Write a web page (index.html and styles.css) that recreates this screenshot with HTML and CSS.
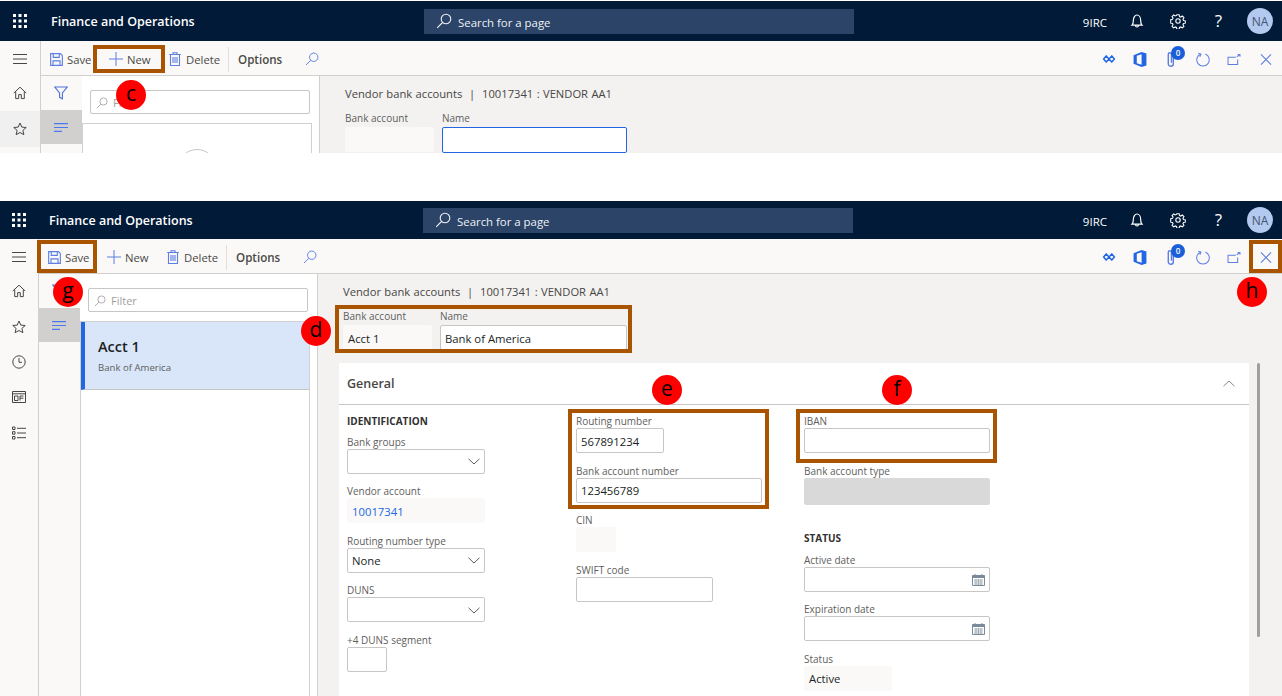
FILE: index.html
```html
<!DOCTYPE html>
<html>
<head>
<meta charset="utf-8">
<title>Vendor bank accounts</title>
<link rel="stylesheet" href="styles.css">
</head>
<body>

<!-- icon sprite -->
<svg class="sprite" xmlns="http://www.w3.org/2000/svg">
	<symbol id="i-waffle" viewBox="0 0 14 14"><g fill="currentColor"><rect x="0" y="0" width="3" height="3"/><rect x="5.5" y="0" width="3" height="3"/><rect x="11" y="0" width="3" height="3"/><rect x="0" y="5.5" width="3" height="3"/><rect x="5.5" y="5.5" width="3" height="3"/><rect x="11" y="5.5" width="3" height="3"/><rect x="0" y="11" width="3" height="3"/><rect x="5.5" y="11" width="3" height="3"/><rect x="11" y="11" width="3" height="3"/></g></symbol>
	<symbol id="i-search" viewBox="0 0 16 16"><path d="M10 1.2a4.8 4.8 0 1 1 0 9.6a4.8 4.8 0 0 1 0-9.6zM6.5 9.5L1.2 14.8" fill="none" stroke="currentColor" stroke-width="1.1"/></symbol>
	<symbol id="i-bell" viewBox="0 0 16 16"><path d="M3 12.2c1-1 1.3-2 1.3-4.5C4.300 4.500 6 2 8 2s3.700 2.500 3.700 5.700c0 2.500.3 3.500 1.300 4.500zM6.500 12.500c0 2 3 2 3 0" fill="none" stroke="currentColor" stroke-width="1.2"/></symbol>
	<symbol id="i-gear" viewBox="0 0 16 16"><circle cx="8" cy="8" r="2.200" fill="none" stroke="currentColor" stroke-width="1.100"/><path d="M6.700 1h2.600l.4 2 1.400.6 1.700-1.100 1.800 1.800-1.100 1.700.6 1.400 2 .4v2.600l-2 .4-.6 1.400 1.100 1.700-1.800 1.800-1.700-1.100-1.400.6-.4 2H6.700l-.4-2-1.400-.6-1.700 1.100-1.800-1.800 1.100-1.700-.6-1.400-2-.4V6.600l2-.4.600-1.400-1.100-1.700 1.800-1.800 1.700 1.100 1.400-.6z" transform="translate(.8 .8) scale(.9)" fill="none" stroke="currentColor" stroke-width="1.200"/></symbol>
	<symbol id="i-menu" viewBox="0 0 14 10"><path d="M0 .5h14M0 5h14M0 9.500h14" stroke="currentColor" stroke-width="1"/></symbol>
	<symbol id="i-home" viewBox="0 0 14 14"><path d="M.8 7L7 1.200L13.200 7M2.700 5.600v7h3v-4h2.600v4h3v-7" fill="none" stroke="currentColor" stroke-width="1"/></symbol>
	<symbol id="i-star" viewBox="0 0 14 14"><path d="M7 1l1.800 4.100l4.400.4l-3.300 2.900l1 4.300L7 10.500l-3.900 2.200l1-4.300L.8 5.500l4.400-.4z" fill="none" stroke="currentColor" stroke-width="1"/></symbol>
	<symbol id="i-clock" viewBox="0 0 14 14"><circle cx="7" cy="7" r="6.200" fill="none" stroke="currentColor" stroke-width="1"/><path d="M7 3v4.300h3" fill="none" stroke="currentColor" stroke-width="1"/></symbol>
	<symbol id="i-workspace" viewBox="0 0 14 12"><path d="M.5 .5h13v11H.5zM.5 2.800h13" fill="none" stroke="currentColor" stroke-width="1"/><path d="M2.500 5h3.500v4.500H2.500zM8 5h3.500M8 7.200h3.500M8 5v4.500" fill="none" stroke="currentColor" stroke-width="1"/></symbol>
	<symbol id="i-list" viewBox="0 0 14 13"><path d="M.5 .5h2.500v2.500H.5zM.5 5.200h2.500v2.500H.5zM.5 10h2.500v2.500H.5zM5 1.800h9M5 6.500h9M5 11.200h9" fill="none" stroke="currentColor" stroke-width="1"/></symbol>
	<symbol id="i-save" viewBox="0 0 14 14"><path d="M.7 .7h10.600l2 2v10.600H.7zM3.500 .7v4h6.500v-4M3.200 13.300V8.500h7.600v4.800" fill="none" stroke="currentColor" stroke-width="1.200"/></symbol>
	<symbol id="i-plus" viewBox="0 0 14 14"><path d="M7 0v14M0 7h14" stroke="currentColor" stroke-width="1"/></symbol>
	<symbol id="i-trash" viewBox="0 0 12 14"><path d="M.2 2.500h11.600M4 2.500V.8h4v1.700M1.500 2.500v11h9v-11M4 5v6M6 5v6M8 5v6" fill="none" stroke="currentColor" stroke-width="1.100"/></symbol>
	<symbol id="i-funnel" viewBox="0 0 14 14"><path d="M.8 1h12.400L8.400 7v5.800l-2.800-1.500V7z" fill="none" stroke="currentColor" stroke-width="1.100"/></symbol>
	<symbol id="i-lines" viewBox="0 0 14 9"><path d="M0 .6h14M0 4.500h14M0 8.400h8" stroke="currentColor" stroke-width="1.200"/></symbol>
	<symbol id="i-apps" viewBox="0 0 12 8"><path d="M3.200 1L6 4L3.200 7L.6 4zM8.800 1L11.400 4L8.800 7L6 4z" fill="none" stroke="currentColor" stroke-width="1.500"/></symbol>
	<symbol id="i-office" viewBox="0 0 12 14"><path d="M0 3L7.500 0L12 1.300v11.400L7.500 14L0 11zM7.500 2L3 3.500V10.500L7.500 12z" fill="currentColor" fill-rule="evenodd"/></symbol>
	<symbol id="i-clip" viewBox="0 0 10 16"><path d="M7.500 3.500v9a2.700 2.700 0 0 1-5.400 0v-10a1.700 1.700 0 0 1 3.400 0v9" fill="none" stroke="currentColor" stroke-width="1.500"/></symbol>
	<symbol id="i-refresh" viewBox="0 0 16 16"><path d="M5.500 2.100a6.700 6.700 0 1 0 5 0M2.800 1.200L5.800 2.200L4.600 5" fill="none" stroke="currentColor" stroke-width="1.100"/></symbol>
	<symbol id="i-open" viewBox="0 0 14 12"><path d="M9 3.500H.5v8h10.500V6M10 3L13 1M11 .5h2.500v2.500" fill="none" stroke="currentColor" stroke-width="1.100"/></symbol>
	<symbol id="i-close" viewBox="0 0 12 12"><path d="M.5 .5l11 11M11.500 .5l-11 11" stroke="currentColor" stroke-width="1.200"/></symbol>
	<symbol id="i-down" viewBox="0 0 12 7"><path d="M.5 .8L6 6L11.500 .8" fill="none" stroke="currentColor" stroke-width="1"/></symbol>
	<symbol id="i-calendar" viewBox="0 0 13 12"><path d="M.5 1.500h12v10H.5zM3 0v2M10 0v2" fill="none" stroke="currentColor" stroke-width="1"/><path d="M.5 1.500h12v2.500H.5z" fill="currentColor"/><path d="M2 6h9M2 8h9M2 10h9M4 5v6M6.500 5v6M9 5v6" stroke="currentColor" stroke-width=".6"/></symbol>
</svg>

<div class="page">

<!-- first screenshot: new record -->
<section class="shot shot-new">
	<header class="topbar">
		<div class="brand"><span class="waffle-cell"><svg class="ic-waffle"><use href="#i-waffle"/></svg></span><span class="brand-name">Finance and Operations</span></div>
		<div class="global-search"><svg class="ic-16"><use href="#i-search"/></svg><span>Search for a page</span></div>
		<div class="top-right">
			<span class="company">9IRC</span>
			<span class="top-icon"><svg class="ic-16"><use href="#i-bell"/></svg></span>
			<span class="top-icon"><svg class="ic-16"><use href="#i-gear"/></svg></span>
			<span class="top-icon help">?</span>
			<span class="avatar">NA</span>
		</div>
	</header>
	<div class="workspace">
		<nav class="nav">
			<div class="nav-menu"><svg class="ic-menu"><use href="#i-menu"/></svg></div>
			<div class="nav-item"><svg class="ic-14"><use href="#i-home"/></svg></div>
			<div class="nav-item nav-active"><svg class="ic-14"><use href="#i-star"/></svg></div>
		</nav>
		<div class="main">
			<div class="toolbar">
				<span class="tool tool-save"><svg class="ic-13"><use href="#i-save"/></svg>Save</span>
				<span class="tool tool-new"><svg class="ic-14"><use href="#i-plus"/></svg>New</span>
				<span class="tool tool-delete"><svg class="ic-14"><use href="#i-trash"/></svg>Delete</span>
				<span class="tool-sep"></span>
				<span class="tool-options">Options</span>
				<svg class="ic-14 tool-search"><use href="#i-search"/></svg>
				<div class="tool-right">
					<svg class="ic-tool ic-apps"><use href="#i-apps"/></svg>
					<svg class="ic-tool ic-office"><use href="#i-office"/></svg>
					<span class="clip"><svg class="ic-tool"><use href="#i-clip"/></svg><span class="clip-badge">0</span></span>
					<svg class="ic-tool"><use href="#i-refresh"/></svg>
					<svg class="ic-tool ic-open"><use href="#i-open"/></svg>
					<svg class="ic-tool ic-close"><use href="#i-close"/></svg>
				</div>
			</div>
			<div class="content">
				<div class="rail">
					<div class="rail-item"><svg class="ic-14"><use href="#i-funnel"/></svg></div>
					<div class="rail-item rail-active"><svg class="ic-lines"><use href="#i-lines"/></svg></div>
				</div>
				<div class="list-pane">
					<div class="filter"><svg class="ic-12"><use href="#i-search"/></svg>Filter</div>
					<div class="records">
						<div class="empty-circle"></div>
					</div>
				</div>
				<div class="details">
					<div class="caption">Vendor bank accounts &nbsp;|&nbsp; 10017341 : VENDOR AA1</div>
					<div class="key-fields">
						<div class="key-account"><div class="label">Bank account</div><div class="control readonly"></div></div>
						<div class="key-name"><div class="label">Name</div><div class="control focused"></div></div>
					</div>
				</div>
			</div>
		</div>
	</div>
</section>

<!-- second screenshot: saved record -->
<section class="shot shot-saved">
	<header class="topbar">
		<div class="brand"><span class="waffle-cell"><svg class="ic-waffle"><use href="#i-waffle"/></svg></span><span class="brand-name">Finance and Operations</span></div>
		<div class="global-search"><svg class="ic-16"><use href="#i-search"/></svg><span>Search for a page</span></div>
		<div class="top-right">
			<span class="company">9IRC</span>
			<span class="top-icon"><svg class="ic-16"><use href="#i-bell"/></svg></span>
			<span class="top-icon"><svg class="ic-16"><use href="#i-gear"/></svg></span>
			<span class="top-icon help">?</span>
			<span class="avatar">NA</span>
		</div>
	</header>
	<div class="workspace">
		<nav class="nav">
			<div class="nav-menu"><svg class="ic-menu"><use href="#i-menu"/></svg></div>
			<div class="nav-item"><svg class="ic-14"><use href="#i-home"/></svg></div>
			<div class="nav-item"><svg class="ic-14"><use href="#i-star"/></svg></div>
			<div class="nav-item nav-short"><svg class="ic-14"><use href="#i-clock"/></svg></div>
			<div class="nav-item"><svg class="ic-14"><use href="#i-workspace"/></svg></div>
			<div class="nav-item"><svg class="ic-14"><use href="#i-list"/></svg></div>
		</nav>
		<div class="main">
			<div class="toolbar">
				<span class="tool tool-save"><svg class="ic-13"><use href="#i-save"/></svg>Save</span>
				<span class="tool tool-new"><svg class="ic-14"><use href="#i-plus"/></svg>New</span>
				<span class="tool tool-delete"><svg class="ic-14"><use href="#i-trash"/></svg>Delete</span>
				<span class="tool-sep"></span>
				<span class="tool-options">Options</span>
				<svg class="ic-14 tool-search"><use href="#i-search"/></svg>
				<div class="tool-right">
					<svg class="ic-tool ic-apps"><use href="#i-apps"/></svg>
					<svg class="ic-tool ic-office"><use href="#i-office"/></svg>
					<span class="clip"><svg class="ic-tool"><use href="#i-clip"/></svg><span class="clip-badge">0</span></span>
					<svg class="ic-tool"><use href="#i-refresh"/></svg>
					<svg class="ic-tool ic-open"><use href="#i-open"/></svg>
					<svg class="ic-tool ic-close"><use href="#i-close"/></svg>
				</div>
			</div>
			<div class="content">
				<div class="rail">
					<div class="rail-item"><svg class="ic-14"><use href="#i-funnel"/></svg></div>
					<div class="rail-item rail-active"><svg class="ic-lines"><use href="#i-lines"/></svg></div>
				</div>
				<div class="list-pane">
					<div class="filter"><svg class="ic-12"><use href="#i-search"/></svg>Filter</div>
					<div class="records">
						<div class="record">
							<div class="record-title">Acct 1</div>
							<div class="record-sub">Bank of America</div>
						</div>
					</div>
				</div>
				<div class="details">
					<div class="caption">Vendor bank accounts &nbsp;|&nbsp; 10017341 : VENDOR AA1</div>
					<div class="key-fields">
						<div class="key-account"><div class="label">Bank account</div><div class="control readonly">Acct 1</div></div>
						<div class="key-name"><div class="label">Name</div><div class="control">Bank of America</div></div>
					</div>
					<div class="card-row">
						<div class="card">
							<div class="card-head"><span>General</span><svg class="ic-up"><use href="#i-down"/></svg></div>
							<div class="card-body">
								<div class="col">
									<div class="group-title">IDENTIFICATION</div>
									<div class="field"><div class="label">Bank groups</div><div class="control select w-138"><svg class="ic-down"><use href="#i-down"/></svg></div></div>
									<div class="field"><div class="label">Vendor account</div><div class="control readonly w-138 link">10017341</div></div>
									<div class="field"><div class="label">Routing number type</div><div class="control select w-138">None<svg class="ic-down"><use href="#i-down"/></svg></div></div>
									<div class="field"><div class="label">DUNS</div><div class="control select w-138"><svg class="ic-down"><use href="#i-down"/></svg></div></div>
									<div class="field"><div class="label">+4 DUNS segment</div><div class="control w-40"></div></div>
								</div>
								<div class="col">
									<div class="field"><div class="label">Routing number</div><div class="control w-88">567891234</div></div>
									<div class="field"><div class="label">Bank account number</div><div class="control w-186">123456789</div></div>
									<div class="field"><div class="label">CIN</div><div class="control readonly w-40"></div></div>
									<div class="field"><div class="label">SWIFT code</div><div class="control w-137"></div></div>
								</div>
								<div class="col">
									<div class="field"><div class="label">IBAN</div><div class="control w-186"></div></div>
									<div class="field field-type"><div class="label">Bank account type</div><div class="control disabled w-186"></div></div>
									<div class="group-title group-status">STATUS</div>
									<div class="field"><div class="label">Active date</div><div class="control select w-186"><svg class="ic-cal"><use href="#i-calendar"/></svg></div></div>
									<div class="field"><div class="label">Expiration date</div><div class="control select w-186"><svg class="ic-cal"><use href="#i-calendar"/></svg></div></div>
									<div class="field"><div class="label">Status</div><div class="control readonly w-88">Active</div></div>
								</div>
							</div>
						</div>
						<div class="scrollbar"></div>
					</div>
				</div>
			</div>
		</div>
	</div>
</section>

<!-- callouts drawn on top of the screenshots -->
<div class="callout-box box-c"></div>
<div class="callout-box box-g"></div>
<div class="callout-box box-h"></div>
<div class="callout-box box-d"></div>
<div class="callout-box box-e"></div>
<div class="callout-box box-f"></div>
<div class="callout-dot dot-c">c</div>
<div class="callout-dot dot-g">g</div>
<div class="callout-dot dot-h">h</div>
<div class="callout-dot dot-d">d</div>
<div class="callout-dot dot-e">e</div>
<div class="callout-dot dot-f">f</div>

</div>
</body>
</html>
```

FILE: styles.css
```css
html, body {
	margin: 0;
	padding: 0;
	background: #fff;
}
body {
	font-family: "Open Sans", "Noto Sans", sans-serif;
	font-size: 12px;
	color: #323130;
	overflow: hidden;
}
.sprite {
	display: none;
}
svg {
	display: block;
	flex: none;
}
.page {
	position: relative;
	width: 1282px;
	height: 696px;
	overflow: hidden;
}

/* the two screenshots */
.shot {
	display: flex;
	flex-direction: column;
	overflow: hidden;
}
.shot-new {
	--nav: 42px;
	--brand: 424px;
	--top: 40px;
	height: 152px;
	margin-top: 1px;
	margin-bottom: 48px;
}
.shot-saved {
	--nav: 40px;
	--brand: 423px;
	--top: 38px;
	height: 495px;
}

/* top bar */
.topbar {
	flex: none;
	display: flex;
	align-items: center;
	height: var(--top);
	background: #001a38;
	color: #fff;
}
.brand {
	display: flex;
	align-items: center;
	width: var(--brand);
	flex: none;
}
.waffle-cell {
	display: flex;
	justify-content: center;
	width: calc(var(--nav) - 2px);
}
.ic-waffle {
	width: 14px;
	height: 14px;
}
.brand-name {
	margin-left: 11px;
	font-size: 12.5px;
	font-weight: 600;
}
.global-search {
	display: flex;
	align-items: center;
	gap: 6px;
	width: 418px;
	height: 25px;
	padding-left: 12px;
	background: #2b4468;
	font-size: 11.4px;
	color: #eef1f5;
}
.global-search span {
	padding-top: 2px;
}
.top-right {
	display: flex;
	align-items: center;
	margin-left: auto;
	padding-right: 9px;
}
.company {
	margin-right: 9px;
	padding-top: 2px;
	font-size: 11.5px;
}
.top-icon {
	display: flex;
	justify-content: center;
	width: 41px;
}
.help {
	font-size: 17px;
	line-height: 16px;
}
.avatar {
	display: flex;
	align-items: center;
	justify-content: center;
	width: 26px;
	height: 26px;
	margin-left: 8px;
	border-radius: 50%;
	background: #b4c9ef;
	color: #44546f;
	font-size: 12px;
}
.ic-16 {
	width: 16px;
	height: 16px;
}
.ic-14 {
	width: 14px;
	height: 14px;
}
.ic-13 {
	width: 13px;
	height: 13px;
}
.ic-12 {
	width: 12px;
	height: 12px;
}

/* left nav */
.workspace {
	flex: 1;
	display: flex;
	min-height: 0;
}
.nav {
	flex: none;
	width: calc(var(--nav) - 2px);
	border-right: 1px solid #d2d0ce;
	background: #faf9f8;
	box-sizing: content-box;
	color: #484644;
}
.nav-menu {
	display: flex;
	align-items: center;
	justify-content: center;
	height: 32px;
	padding-top: 2px;
}
.ic-menu {
	width: 14px;
	height: 10px;
}
.nav-item {
	display: flex;
	align-items: center;
	justify-content: center;
	height: 36px;
}
.nav-short {
	height: 34px;
}
.nav-active {
	background: #f0f0f0;
}

/* command bar */
.main {
	flex: 1;
	min-width: 0;
	display: flex;
	flex-direction: column;
}
.toolbar {
	flex: none;
	display: flex;
	align-items: center;
	height: 32px;
	padding: 2px 0 0 9px;
	background: #faf9f8;
	border-bottom: 1px solid #d2d0ce;
	color: #4a4947;
}
.toolbar svg {
	color: #5d7fe3;
}
.tool {
	display: flex;
	align-items: center;
	gap: 3px;
	font-size: 11.3px;
}
.tool-save {
	width: 59px;
	gap: 4px;
}
.tool-new {
	width: 59px;
	gap: 4px;
}
.tool-delete {
	width: 60px;
	gap: 4px;
}
.tool-sep {
	width: 1px;
	height: 25px;
	background: #e1dfdd;
}
.tool-options {
	margin-left: 9px;
	font-size: 11.6px;
	font-weight: 600;
}
.tool-search {
	margin-left: 23px;
}
.tool-right {
	display: flex;
	align-items: center;
	gap: 11px;
	margin-left: auto;
	padding-right: 6px;
}
.ic-tool {
	width: 20px;
	height: 15px;
}
.toolbar .ic-apps {
	height: 8px;
	color: #2266e3;
}
.toolbar .ic-office {
	color: #2266e3;
}
.clip {
	position: relative;
	margin-right: 1px;
}
.clip-badge {
	position: absolute;
	top: -6px;
	left: 10px;
	width: 14px;
	height: 14px;
	border-radius: 50%;
	background: #1a5fd8;
	color: #fff;
	font-size: 8px;
	font-weight: 600;
	line-height: 14px;
	text-align: center;
}
.ic-open {
	height: 11px;
}
.ic-close {
	height: 11px;
	margin-left: 1px;
}

/* body of the form */
.content {
	flex: 1;
	display: flex;
	min-height: 0;
}
.rail {
	flex: none;
	width: 41px;
	background: #faf9f8;
}
.rail-item {
	display: flex;
	align-items: center;
	justify-content: center;
	box-sizing: border-box;
	height: 34px;
	padding-right: 2px;
	color: #4f6fd8;
}
.rail-active {
	background: #d2d0ce;
	color: #4a78f0;
}
.ic-lines {
	width: 14px;
	height: 9px;
}
.list-pane {
	flex: none;
	width: 237px;
	background: #fff;
	border-right: 1px solid #d2d0ce;
}
.filter {
	display: flex;
	align-items: center;
	gap: 5px;
	box-sizing: border-box;
	width: 220px;
	height: 24px;
	margin: 14px 0 9px 8px;
	padding: 1px 0 0 5px;
	border: 1px solid #c8c6c4;
	border-radius: 2px;
	font-size: 11px;
	color: #a19f9d;
}
.records {
	box-sizing: border-box;
	width: 230px;
	height: 400px;
	border: 1px solid #d2d0ce;
}
.empty-circle {
	width: 38px;
	height: 38px;
	margin: 25px auto 0;
	border: 1px solid #c8c6c4;
	border-radius: 50%;
}
.record {
	height: 68px;
	box-sizing: border-box;
	padding: 15px 0 0 13px;
	background: #d9e5f9;
	border-left: 4px solid #2266e3;
	border-bottom: 1px solid #c8c6c4;
}
.record-title {
	font-size: 14.5px;
	font-weight: 600;
	line-height: 19px;
	color: #201f1e;
}
.record-sub {
	margin-top: 4px;
	font-size: 9.6px;
	line-height: 15px;
	color: #605e5c;
}
.details {
	flex: 1;
	min-width: 0;
	padding: 9px 0 0 25px;
	background: #f3f2f1;
}
.caption {
	height: 17px;
	font-size: 11.2px;
	line-height: 17px;
	word-spacing: .5px;
	color: #484644;
}
.key-fields {
	display: flex;
	gap: 8px;
	margin-top: 8px;
}
.key-fields .label {
	height: 17px;
	line-height: 16px;
}
.key-account {
	width: 89px;
}
.key-name {
	width: 187px;
}
.shot-new .key-name {
	width: 185px;
}
.label {
	height: 15px;
	font-size: 10px;
	line-height: 17px;
	color: #605e5c;
	white-space: nowrap;
}

/* inputs */
.control {
	display: flex;
	align-items: center;
	box-sizing: border-box;
	height: 25px;
	padding: 1px 0 0 4px;
	background: #fff;
	border: 1px solid #c8c6c4;
	border-radius: 2px;
	font-size: 11.3px;
	color: #201f1e;
}
.readonly {
	background: #faf9f8;
	border-color: #faf9f8;
}
.focused {
	height: 26px;
	border-color: #2266e3;
}
.disabled {
	height: 27px;
	background: #d9d9d9;
	border-color: #d9d9d9;
}
.select {
	justify-content: space-between;
	padding-right: 4px;
}
.link {
	color: #2266e3;
}
.w-40 {
	width: 40px;
}
.w-88 {
	width: 88px;
}
.w-137 {
	width: 137px;
}
.w-138 {
	width: 138px;
}
.w-186 {
	width: 186px;
}
.ic-down {
	width: 12px;
	height: 7px;
	margin-left: auto;
	color: #605e5c;
}
.ic-cal {
	width: 13px;
	height: 12px;
	margin-left: auto;
	color: #7a8a99;
}

/* General card */
.card-row {
	display: flex;
	margin: 13px 0 0 -4px;
}
.card {
	flex: none;
	width: 910px;
	height: 340px;
	background: #fff;
}
.card-head {
	display: flex;
	align-items: center;
	justify-content: space-between;
	box-sizing: border-box;
	height: 42px;
	padding: 0 14px 0 8px;
	border-bottom: 1px solid #c8c6c4;
	font-size: 12.5px;
	font-weight: 600;
	color: #484644;
}
.ic-up {
	width: 12px;
	height: 7px;
	color: #8a8886;
	transform: rotate(180deg);
}
.card-body {
	display: grid;
	grid-template-columns: 229px 228px 1fr;
	padding: 8px 0 0 8px;
}
.group-title {
	height: 15px;
	margin-bottom: 5.6px;
	font-size: 10px;
	font-weight: 700;
	line-height: 17px;
	color: #323130;
}
.field {
	margin-bottom: 9.6px;
}
.field-type {
	margin-bottom: 25px;
}
.group-status {
	margin-bottom: 7px;
}
.scrollbar {
	width: 3px;
	height: 274px;
	margin-left: 8px;
	border-radius: 2px;
	background: #a19f9d;
}

/* callouts */
.callout-box {
	position: absolute;
	box-sizing: border-box;
	border: 4px solid #a85400;
}
.box-c {
	left: 93px;
	top: 45px;
	width: 72px;
	height: 28px;
}
.box-g {
	left: 37px;
	top: 240px;
	width: 60px;
	height: 33px;
}
.box-h {
	left: 1249px;
	top: 240px;
	width: 33px;
	height: 33px;
}
.box-d {
	left: 335px;
	top: 305px;
	width: 297px;
	height: 48px;
}
.box-e {
	left: 568px;
	top: 409px;
	width: 201px;
	height: 100px;
}
.box-f {
	left: 796px;
	top: 409px;
	width: 201px;
	height: 54px;
}
.callout-dot {
	position: absolute;
	width: 30px;
	height: 30px;
	border-radius: 50%;
	background: #f00;
	color: #000;
	font-size: 21px;
	line-height: 27px;
	text-align: center;
}
.dot-c {
	left: 116px;
	top: 80px;
}
.dot-g {
	left: 53px;
	top: 277px;
}
.dot-h {
	left: 1237px;
	top: 277px;
}
.dot-d {
	left: 301px;
	top: 316px;
}
.dot-e {
	left: 652px;
	top: 375px;
}
.dot-f {
	left: 882px;
	top: 375px;
}
```
